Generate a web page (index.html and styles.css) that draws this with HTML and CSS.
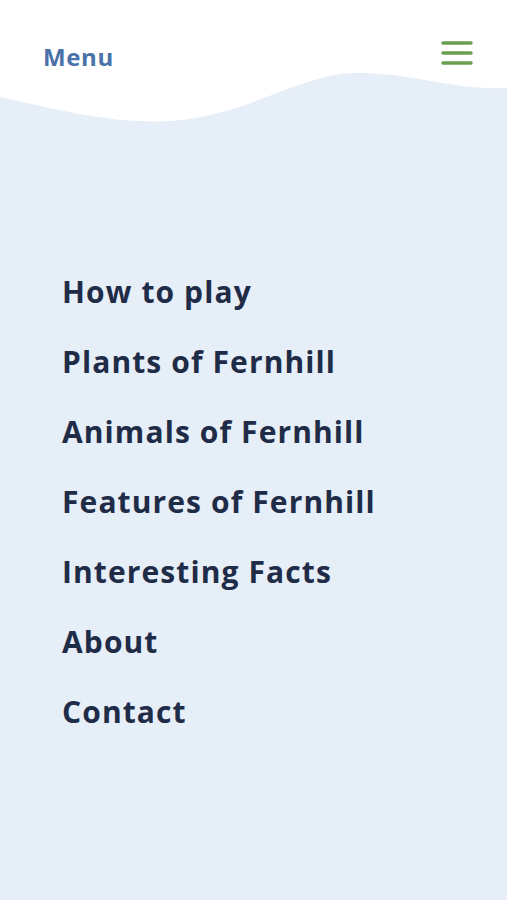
FILE: index.html
```html
<!DOCTYPE html>
<html lang="en">
<head>
    <meta charset="UTF-8" />
    <meta name="viewport" content="width=device-width, initial-scale=1.0" />
    <title>Menu</title>
    <link rel="stylesheet" href="styles.css">
</head>
<body>

<header class="top-bar">
    <span class="menu-title">Menu</span>
    <button class="menu-toggle" aria-label="Close menu">
        <svg width="32" height="26" viewBox="0 0 32 26">
            <line x1="2" y1="3" x2="30" y2="3" />
            <line x1="2" y1="13" x2="30" y2="13" />
            <line x1="2" y1="23" x2="30" y2="23" />
        </svg>
    </button>
</header>

<svg class="wave" viewBox="0 0 507 52" preserveAspectRatio="none">
    <path d="M0,24 C60,37 110,51 170,48 C250,43 300,-1 360,0 C420,1 450,17 507,15 V0 H0 Z" />
</svg>

<nav class="main-nav">
    <ul>
        <li><a href="#">How to play</a></li>
        <li><a href="#">Plants of Fernhill</a></li>
        <li><a href="#">Animals of Fernhill</a></li>
        <li><a href="#">Features of Fernhill</a></li>
        <li><a href="#">Interesting Facts</a></li>
        <li><a href="#">About</a></li>
        <li><a href="#">Contact</a></li>
    </ul>
</nav>

</body>
</html>
```

FILE: styles.css
```css
:root {
    --bg-blue: #e6eef8;
    --title-blue: #4a72a8;
    --nav-text: #1f2c47;
    --toggle-green: #6a9f4f;
}

body {
    margin: 0;
    background: var(--bg-blue);
    font-family: 'Open Sans', 'Liberation Sans', sans-serif;
}

.top-bar {
    background: white;
    height: 73px;
    display: flex;
    justify-content: space-between;
    align-items: flex-start;
    padding: 0 34px 0 43px;
    box-sizing: border-box;
}

.menu-title {
    margin-top: 41px;
    font-size: 24px;
    font-weight: 700;
    letter-spacing: 0.6px;
    color: var(--title-blue);
    line-height: 32px;
}

.menu-toggle {
    margin-top: 40px;
    padding: 0;
    border: none;
    background: none;
    cursor: pointer;
}

.menu-toggle svg {
    display: block;
}

.menu-toggle line {
    stroke: var(--toggle-green);
    stroke-width: 3.5;
    stroke-linecap: round;
}

.wave {
    display: block;
    width: 100%;
    height: 52px;
}

.wave path {
    fill: white;
}

.main-nav ul {
    list-style: none;
    margin: 0;
    padding: 132px 0 0 62px;
}

.main-nav li {
    height: 70px;
    line-height: 70px;
}

.main-nav a {
    font-size: 30px;
    font-weight: 700;
    letter-spacing: 1.1px;
    color: var(--nav-text);
    text-decoration: none;
}
```
